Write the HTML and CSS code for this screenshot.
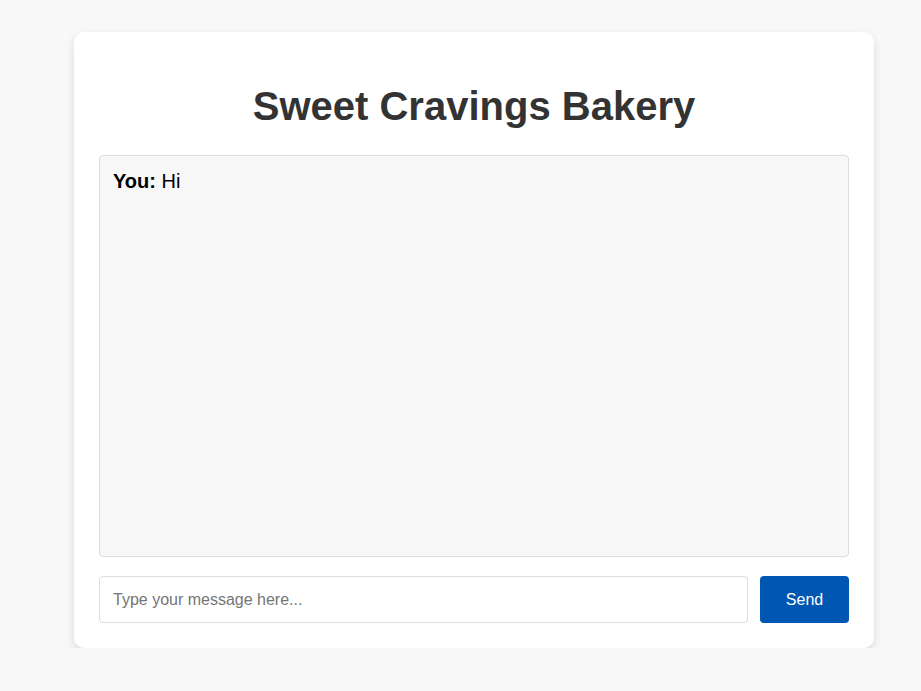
FILE: index.html
```html
<!doctype html>
<html lang="en">
<head>
  <meta charset="utf-8">
  <title>Sweet Cravings Bakery</title>
  <link rel="stylesheet" href="styles.css">
</head>
<body>
  <div class="container">
    <h1>Sweet Cravings Bakery</h1>
    <div class="chat-box" id="chat">
      <p class="msg"><strong>You:</strong> Hi</p>
    </div>
    <form class="input-row">
      <input type="text" class="msg-input" placeholder="Type your message here...">
      <button type="button" class="send-btn">Send</button>
    </form>
  </div>
</body>
</html>
```

FILE: styles.css
```css
body { margin: 0; padding: 32px 0 0 74px; background: #f8f8f8; font-family: "Liberation Sans", Arial, sans-serif; }
.container { width: 750px; padding: 25px; background: #fff; border-radius: 10px; box-shadow: 0 4px 10px rgba(0,0,0,0.12); }
h1 { text-align: center; color: #333; font-size: 40px; margin: 27px 0 26px; }
.chat-box { height: 402px; border: 1px solid #ddd; border-radius: 4px; background: #f8f8f8; padding: 13px; box-sizing: border-box; overflow-y: auto; }
.msg { margin: 0; font-size: 20px; color: #000; line-height: 24px; }
.input-row { display: flex; gap: 12px; margin: 19px 0 0; }
.msg-input { flex: 1; height: 47px; box-sizing: border-box; font: 16px "Liberation Sans", Arial, sans-serif; padding: 0 13px; border: 1px solid #ddd; border-radius: 4px; outline: none; }
.msg-input::placeholder { color: #757575; }
.send-btn { width: 89px; border: none; border-radius: 4px; background: #0056b3; color: #fff; font: 16px "Liberation Sans", Arial, sans-serif; cursor: pointer; }
```
